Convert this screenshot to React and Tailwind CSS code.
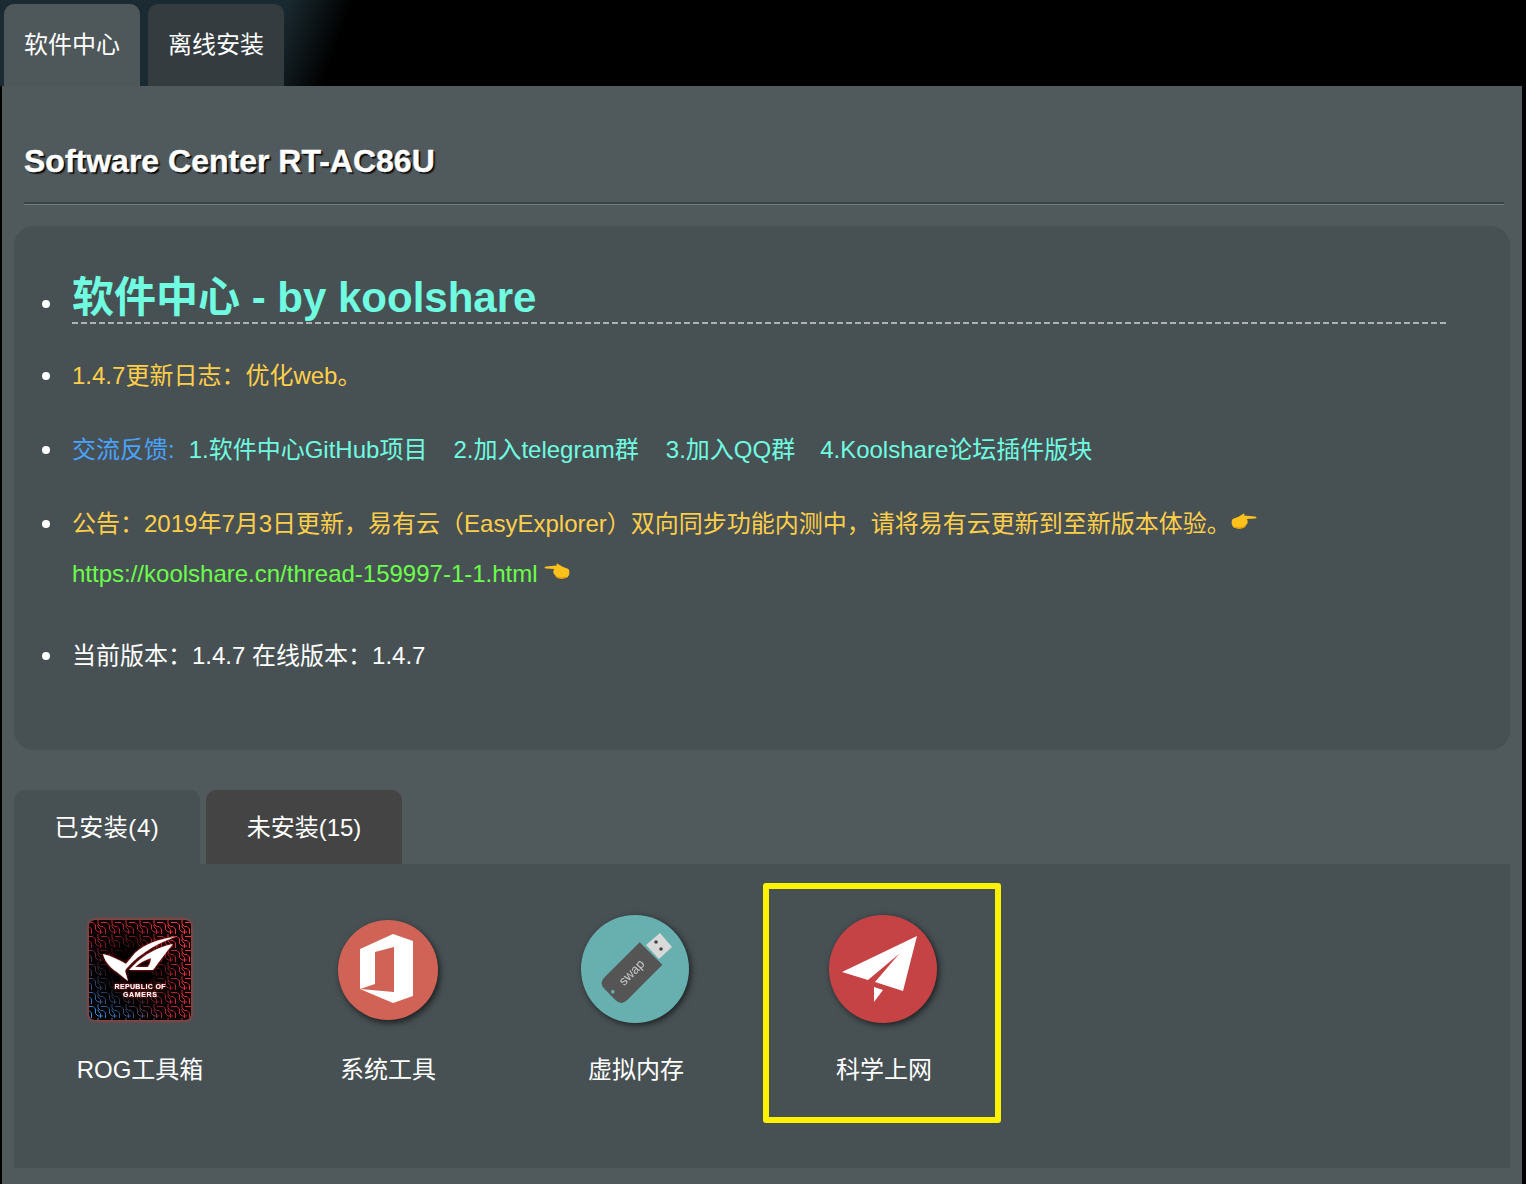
import { useId } from 'react'

const fontStack = '[font-family:"Liberation_Sans","Noto_Sans_CJK_SC",sans-serif]'

function Hand({ flip }) {
  return (
    <svg width="26" height="18" viewBox="0 0 26 18" className={`inline-block align-[1px] ${flip ? '-scale-x-100' : ''}`}>
      <path d="M1 7 C2 5 5 5 7 4 L12 1 C13 0 14 1 13 2.5 L24 3.5 C26 4 26 5.5 24 5.5 L16 6 C17 8 17 11 15 12 L14 14 C12 16 7 16 4 15 C1 14 0 10 1 7Z" fill="#fcc21b" />
      <path d="M4 14 C7 15.5 12 15.5 14 13" stroke="#e59600" strokeWidth="1.2" fill="none" />
    </svg>
  )
}

function RogIcon() {
  const id = useId().replace(/:/g, '')
  return (
    <svg width="102" height="100" viewBox="0 0 102 100" className="mt-[2px] drop-shadow-[0_0_2px_#e0342c]">
      <defs>
        <linearGradient id={`${id}g`} x1="0" y1="1" x2="1" y2="0">
          <stop offset="0" stopColor="#3a9ce8" />
          <stop offset="0.2" stopColor="#2f6cab" />
          <stop offset="0.4" stopColor="#b02430" />
          <stop offset="0.7" stopColor="#f02c30" />
          <stop offset="1" stopColor="#ff3a38" />
        </linearGradient>
        <pattern id={`${id}p`} width="14" height="14" patternUnits="userSpaceOnUse">
          <path d="M0 2.500H4L6.500 5V9.500L9 12H14M2.500 14V9L0 6.500M9 0V4L11.500 6.500H14M11.500 14V9.500L9 7V5M14 2.500H12" stroke="#fff" strokeWidth="1" fill="none" />
        </pattern>
        <mask id={`${id}m`}>
          <rect width="102" height="100" fill={`url(#${id}p)`} />
        </mask>
        <radialGradient id={`${id}d`} cx="0.42" cy="0.5" r="0.55">
          <stop offset="0.3" stopColor="#000" stopOpacity="0.95" />
          <stop offset="0.65" stopColor="#000" stopOpacity="0.4" />
          <stop offset="1" stopColor="#000" stopOpacity="0" />
        </radialGradient>
        <filter id={`${id}f`} x="-20%" y="-20%" width="140%" height="140%">
          <feDropShadow dx="0" dy="0" stdDeviation="1.500" floodColor="#ff2020" />
        </filter>
        <clipPath id={`${id}c`}>
          <rect width="102" height="100" rx="6" />
        </clipPath>
      </defs>
      <g clipPath={`url(#${id}c)`}>
        <rect width="102" height="100" fill="#060304" />
        <rect width="102" height="100" fill={`url(#${id}g)`} mask={`url(#${id}m)`} />
        <rect width="102" height="100" fill={`url(#${id}d)`} />
      </g>
      <g filter={`url(#${id}f)`} fill="#fff">
        <path d="M87 17 C72 18 56 24 46 33 L37 44 C30 40 22 36 14 34 C16 42 22 48 28 52 L39 61 L36 51 C40 44 60 25 87 17Z" />
        <path d="M84 24 C70 27 55 34 44 46 L40 50 L64 50 C70 42 76 33 84 24Z M46 47 C50 43 56 40 62 38 C62 41 61 44 59 47Z" fillRule="evenodd" />
      </g>
      <g fill="#fff" textAnchor="middle" fontFamily="Liberation Sans" fontWeight="700" filter={`url(#${id}f)`}>
        <text x="51" y="68.500" fontSize="7" textLength="51">REPUBLIC OF</text>
        <text x="51" y="77" fontSize="7" textLength="34">GAMERS</text>
      </g>
    </svg>
  )
}

function OfficeIcon() {
  return (
    <svg width="100" height="100" viewBox="0 0 100 100" className="mt-[2px] drop-shadow-[2px_3px_3px_rgba(0,0,0,0.6)]">
      <circle cx="50" cy="50" r="50" fill="#d06355" />
      <path d="M55 14 L75 21 V76 L55 83 L22 69 V29Z M56 27 L37 32 V64 L22 69 L56 72Z" fill="#fff" fillRule="evenodd" />
    </svg>
  )
}

function SwapIcon() {
  return (
    <svg width="108" height="108" viewBox="0 0 108 108" className="-translate-x-px drop-shadow-[2px_2px_3px_rgba(0,0,0,0.6)]">
      <circle cx="54" cy="54" r="54" fill="#68afb0" />
      <path d="M79 18 L91 32 L78 44 L65 30Z" fill="#d9d9d9" />
      <circle cx="75" cy="27" r="1.800" fill="#444" />
      <circle cx="80" cy="34" r="1.800" fill="#444" />
      <g transform="translate(49.5 59) rotate(45)">
        <path d="M-16 -29 H16 V21 Q16 29 8 29 H-8 Q-16 29 -16 21Z" fill="#555" />
        <circle cx="0" cy="25" r="1.800" fill="#68afb0" />
        <text transform="rotate(-90)" x="2" y="4" textAnchor="middle" fontSize="13" fontFamily="Liberation Sans" fill="#c9c9c9">swap</text>
      </g>
    </svg>
  )
}

function PlaneIcon() {
  return (
    <svg width="108" height="108" viewBox="0 0 108 108" className="-translate-x-px drop-shadow-[2px_2px_3px_rgba(0,0,0,0.6)]">
      <circle cx="54" cy="54" r="54" fill="#c54245" />
      <polygon points="88,21 13,57 39,65 70,39 46,67 74,76" fill="#fff" />
      <polygon points="45,72 54,75 45,87" fill="#fff" />
    </svg>
  )
}

const apps = [
  { name: 'ROG工具箱', icon: <RogIcon /> },
  { name: '系统工具', icon: <OfficeIcon /> },
  { name: '虚拟内存', icon: <SwapIcon /> },
  { name: '科学上网', icon: <PlaneIcon /> },
]

const bullet = "relative before:absolute before:left-[-30px] before:top-[21px] before:w-2 before:h-2 before:rounded-full before:bg-white"

export default function App() {
  return (
    <div className={`w-[1526px] h-[1184px] overflow-hidden bg-black text-white ${fontStack}`}>
      {/* top tabs */}
      <div className="h-[86px] pt-1 pl-1 flex gap-2 bg-[linear-gradient(110deg,#1c2b32_0px,#1a2a31_270px,#000000_332px)]">
        <div className="w-[136px] h-[82px] rounded-t-[10px] bg-[#4e575a] flex items-center justify-center text-2xl">软件中心</div>
        <div className="w-[136px] h-[82px] rounded-t-[10px] bg-[#343c3f] flex items-center justify-center text-2xl">离线安装</div>
      </div>

      <div className="ml-[2px] w-[1520px] h-[1098px] bg-[#50595c] px-3">
        <h1 className="pl-[10px] pt-[56px] mb-[22px] text-[32px] leading-[38px] font-bold [-webkit-text-stroke:0.4px_white] [text-shadow:1px_1px_0_#000,2px_2px_1px_#1a1a1a]">
          Software Center RT-AC86U
        </h1>
        <div className="ml-[10px] mr-[6px] h-[3px] border-t-2 border-b border-t-[#3a4346] border-b-[#6e7f85] mb-[21px]" />

        {/* info panel */}
        <div className="h-[524px] rounded-[20px] bg-[#475053]">
          <ul className="pl-[58px] pr-[64px] pt-[47px] text-2xl leading-[50px]">
            <li className="relative mb-[27px] before:absolute before:left-[-30px] before:top-[27px] before:w-2 before:h-2 before:rounded-full before:bg-white">
              <div className="text-[42px] leading-[49px] font-bold text-[#6ffce0]">软件中心 - by koolshare</div>
              <div className="h-[2px] bg-[repeating-linear-gradient(90deg,#aeb2b3_0px,#aeb2b3_6px,transparent_6px,transparent_9px)]" />
            </li>
            <li className={`${bullet} mb-6 text-[#ffcf4a]`}>1.4.7更新日志：优化web。</li>
            <li className={`${bullet} mb-6 text-[#6ffce0]`}>
              <span className="text-[#4aa3ff] mr-[14px]">交流反馈:</span>
              <span className="mr-[26px]">1.软件中心GitHub项目</span>
              <span className="mr-[27px]">2.加入telegram群</span>
              <span className="mr-[25px]">3.加入QQ群</span>
              <span>4.Koolshare论坛插件版块</span>
            </li>
            <li className={`${bullet} mb-8 text-[#ffcf4a]`}>
              公告：2019年7月3日更新，易有云（EasyExplorer）双向同步功能内测中，请将易有云更新到至新版本体验。<Hand />
              <br />
              <span className="text-[#6bff4a]">https://koolshare.cn/thread-159997-1-1.html</span> <Hand flip />
            </li>
            <li className={bullet}>当前版本：1.4.7 在线版本：1.4.7</li>
          </ul>
        </div>

        {/* install tabs */}
        <div className="mt-10 flex gap-[6px] text-2xl">
          <div className="w-[186px] h-[74px] pt-[2px] rounded-t-[10px] bg-[#475053] flex items-center justify-center tracking-[0.6px]">已安装(4)</div>
          <div className="w-[196px] h-[74px] pt-[2px] rounded-t-[10px] bg-[#444444] flex items-center justify-center">未安装(15)</div>
        </div>

        <div className="relative h-[304px] bg-[#475053] pl-[2px] pt-[51px] flex items-start">
          {apps.map((app) => (
            <div key={app.name} className="w-[248px] flex flex-col items-center">
              <div className="w-[108px] h-[108px] flex items-center justify-center">{app.icon}</div>
              <div className="mt-[27px] text-2xl leading-[40px]">{app.name}</div>
            </div>
          ))}
          <div className="absolute left-[749px] top-[19px] w-[238px] h-[240px] border-[6px] border-[#fff200] rounded-[3px]" />
        </div>
      </div>
    </div>
  )
}
